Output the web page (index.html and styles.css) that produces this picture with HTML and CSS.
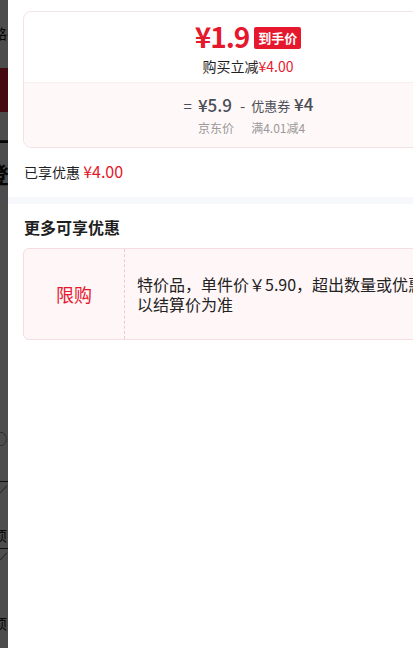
FILE: index.html
```html
<!DOCTYPE html>
<html lang="zh-CN">
<head>
    <meta charset="UTF-8">
    <meta name="viewport" content="width=device-width, initial-scale=1.0">
    <title>优惠明细</title>
    <link rel="stylesheet" href="styles.css">
</head>
<body>

<!-- page behind the drawer -->
<div class="page">
    <div class="page-row r1">路径</div>
    <div class="page-banner"></div>
    <div class="page-row big r2">十</div>
    <div class="page-row big r3">登</div>
    <div class="page-row r4">◯</div>
    <div class="page-row line r5">╱</div>
    <div class="page-row r6">项</div>
    <div class="page-row line r7">╱</div>
    <div class="page-row r8">项</div>
</div>
<div class="mask"></div>

<div class="drawer">
    <div class="summary">
        <div class="price-card">
            <div class="price-top">
                <div class="final-price">
                    <span class="final-num">¥1.9</span>
                    <span class="final-tag">到手价</span>
                </div>
                <div class="reduce">购买立减<span class="red">¥4.00</span></div>
            </div>
            <div class="price-bottom">
                <div class="formula">
                    <span class="op">=</span>
                    <span class="amount">¥5.9</span>
                    <span class="op">-</span>
                    <span class="amount"><small>优惠券</small> ¥4</span>
                    <span></span>
                    <span class="label">京东价</span>
                    <span></span>
                    <span class="label">满4.01减4</span>
                </div>
            </div>
        </div>
        <div class="enjoyed">已享优惠 <span class="red">¥4.00</span></div>
    </div>

    <div class="divider"></div>

    <div class="more">
        <h2>更多可享优惠</h2>
        <div class="promo-card">
            <div class="promo-type">限购</div>
            <div class="promo-desc">特价品，单件价￥5.90，超出数量或优惠时，以结算价为准</div>
        </div>
    </div>
</div>

</body>
</html>
```

FILE: styles.css
```css
:root {
    --red: #e5182d;
    --text: #1f1f1f;
    --gray: #4a4f57;
    --light: #999;
    --font: "Noto Sans CJK SC", "Liberation Sans", sans-serif;
}

body {
    margin: 0;
    font-family: var(--font);
    color: var(--text);
    background: #fff;
    overflow: hidden;
}

.page {
    width: 40px;
    font-size: 14px;
    color: #111;
}

.page-row {
    height: 20px;
    line-height: 20px;
    margin-left: -7px;
}

.page-row.big {
    font-size: 22px;
    font-weight: bold;
    height: 30px;
    line-height: 30px;
    margin-left: -13px;
}

.page-row.line {
    border-top: 1px solid #333;
    color: #555;
}

.r1 { margin-top: 23px; }
.r2 { margin-top: 14px; }
.r3 { margin-top: 2px; }
.r4 { margin-top: 240px; color: #555; }
.r5 { margin-top: 33px; }
.r6 { margin-top: 23px; }
.r7 { margin-top: 3px; }
.r8 { margin-top: 44px; }

.page-banner {
    height: 44px;
    margin-top: 25px;
    background: #e2233a;
}

.mask {
    position: fixed;
    inset: 0;
    background: rgba(0, 0, 0, 0.7);
}

.drawer {
    position: fixed;
    top: 0;
    bottom: 0;
    left: 8px;
    width: 480px;
    background: #fff;
}

.summary {
    padding: 11px 15px 0;
}

.price-card {
    border: 1px solid #f3e3e5;
    border-radius: 8px;
    overflow: hidden;
}

.price-top {
    height: 70px;
    display: flex;
    flex-direction: column;
    align-items: center;
}

.final-price {
    display: flex;
    align-items: center;
    gap: 5px;
    height: 46px;
    padding-top: 1px;
}

.final-num {
    color: var(--red);
    font-size: 28px;
    font-weight: bold;
    letter-spacing: -1px;
    line-height: 36px;
}

.final-tag {
    background: var(--red);
    color: #fff;
    font-size: 13px;
    font-weight: bold;
    padding: 0 4px;
    height: 22px;
    line-height: 22px;
    border-radius: 2px;
    margin-top: 3px;
}

.reduce {
    font-size: 14px;
    line-height: 18px;
    margin-top: -2px;
}

.red {
    color: var(--red);
}

.price-bottom {
    background: #fff8f8;
    border-top: 1px solid #f8eef0;
    height: 64px;
    display: flex;
    justify-content: center;
}

.formula {
    display: grid;
    grid-template-columns: auto auto auto auto;
    grid-template-rows: 24px 22px;
    column-gap: 5px;
    align-items: center;
    padding-top: 10px;
    color: var(--gray);
}

.op {
    font-size: 15px;
    padding: 0 1px;
}

.amount {
    font-size: 17px;
    font-weight: 500;
    line-height: 24px;
}

.amount small {
    font-size: 13px;
    font-weight: normal;
}

.label {
    font-size: 12px;
    color: var(--light);
    line-height: 18px;
}

.enjoyed {
    font-size: 14px;
    padding: 13px 1px 15px;
    line-height: 20px;
}

.enjoyed .red {
    font-size: 16px;
}

.divider {
    height: 7px;
    background: #f6f8fb;
}

.more {
    padding: 0 15px;
}

.more h2 {
    font-size: 16px;
    font-weight: bold;
    margin: 0;
    padding: 12px 1px 10px;
    line-height: 22px;
}

.promo-card {
    display: flex;
    height: 90px;
    background: #fff6f7;
    border: 1px solid #f6dde1;
    border-radius: 6px;
}

.promo-type {
    width: 100px;
    flex-shrink: 0;
    display: flex;
    align-items: center;
    justify-content: center;
    color: var(--red);
    font-size: 18px;
    border-right: 1px dashed #f0c9cf;
}

.promo-desc {
    flex: 1;
    display: flex;
    align-items: center;
    padding: 0 6px 0 12px;
    font-size: 16px;
    line-height: 20px;
    color: #222;
}
```
